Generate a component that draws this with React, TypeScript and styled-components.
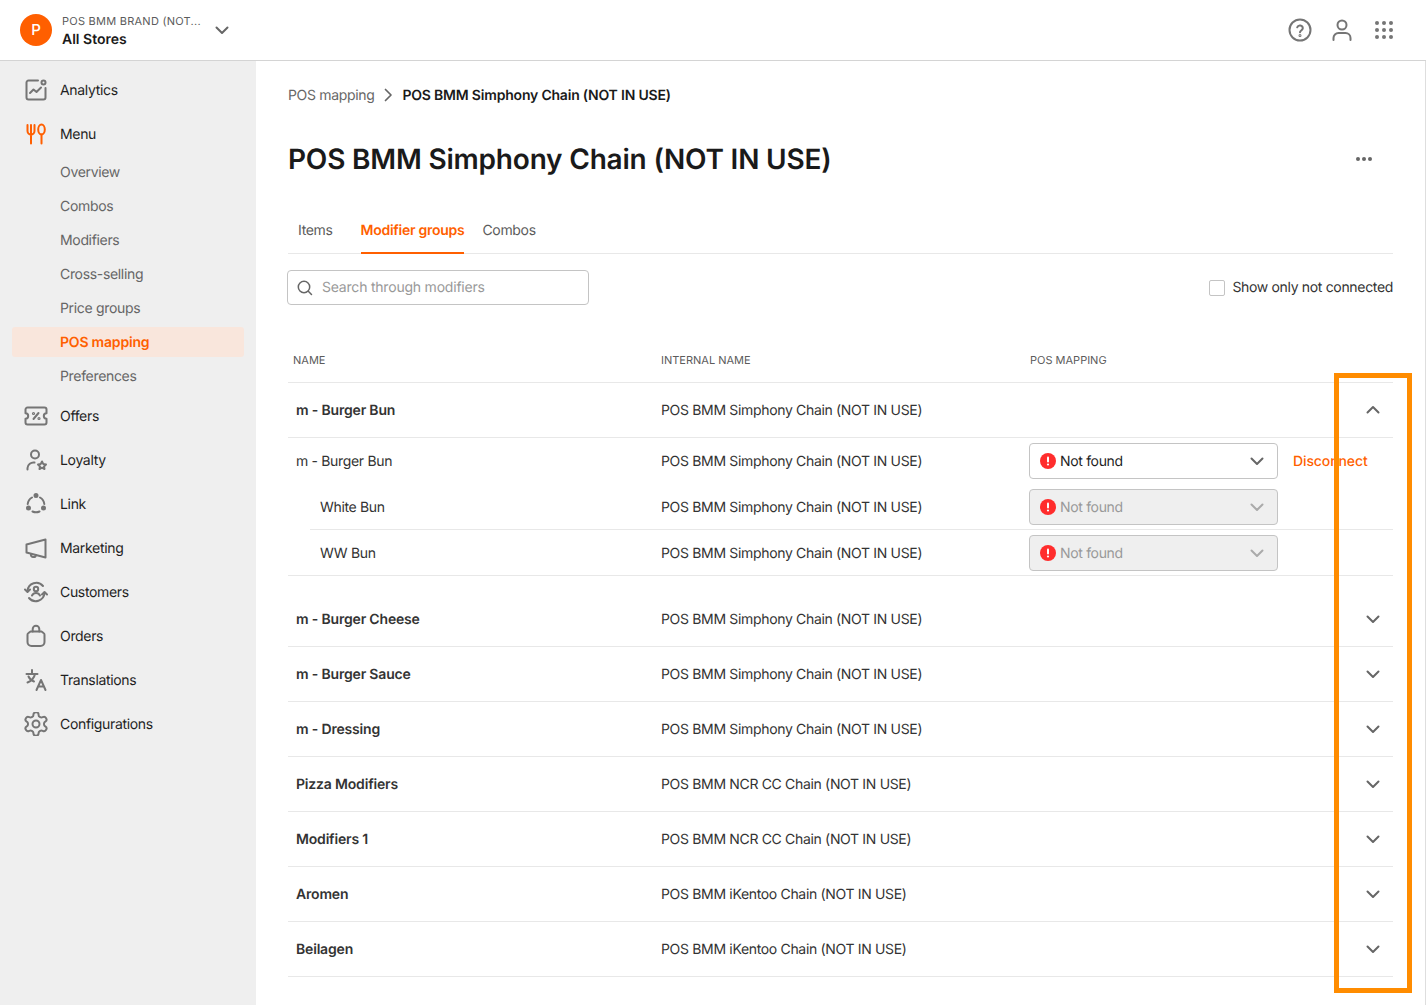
import React from "react";
import styled, { createGlobalStyle } from "styled-components";

const Global = createGlobalStyle`
  html, body { margin: 0; padding: 0; background: #fff; overflow: hidden; }
  body { font-family: Inter, "Liberation Sans", sans-serif; font-size: 14px; color: #1f1f1f; text-rendering: geometricPrecision; letter-spacing: -0.33px; }
  * { box-sizing: border-box; }
`;

const Page = styled.div`
  position: relative;
  width: 1426px;
  height: 1005px;
  overflow: hidden;
  display: flex;
  flex-direction: column;
`;
const TopBar = styled.header`
  height: 61px;
  flex: none;
  display: flex;
  align-items: center;
  padding: 0 30px 1px 20px;
  border-bottom: 1px solid #d4d4d4;
  background: #fff;
`;
const Logo = styled.div`
  width: 32px;
  height: 32px;
  border-radius: 50%;
  background: #ff5f00;
  color: #fff;
  display: flex;
  align-items: center;
  justify-content: center;
  font-size: 15px;
  font-weight: 500;
`;
const Brand = styled.div`
  margin-left: 10px;
  width: 150px;
  padding-top: 2px;
  display: flex;
  flex-direction: column;
  gap: 2px;
`;
const BrandName = styled.div`
  font-size: 11px;
  line-height: 16px;
  letter-spacing: 0.25px;
  color: #5c5c5c;
  white-space: nowrap;
`;
const StoreName = styled.div`
  font-size: 14px;
  line-height: 18px;
  font-weight: 600;
  letter-spacing: 0;
  color: #1a1a1a;
`;
const TopActions = styled.div`
  margin-left: auto;
  display: flex;
  gap: 18px;
  align-items: center;
`;
const Body = styled.div`
  flex: 1;
  display: flex;
  min-height: 0;
`;
const Sidebar = styled.nav`
  width: 256px;
  flex: none;
  background: #efefef;
  padding: 7px 12px 0;
`;
const NavItem = styled.div`
  height: 44px;
  display: flex;
  align-items: center;
  gap: 12px;
  padding-left: 12px;
  color: #1f1f1f;
  font-size: 14px;
`;
const SubList = styled.div`
  display: flex;
  flex-direction: column;
  gap: 4px;
  padding: 2px 0;
  margin: -1px 0 1px;
`;
const SubItem = styled.div<{ $active?: boolean }>`
  height: 30px;
  display: flex;
  align-items: center;
  padding-left: 48px;
  border-radius: 3px;
  font-size: 14px;
  font-weight: ${(p) => (p.$active ? 600 : 400)};
  letter-spacing: ${(p) => (p.$active ? "-0.2px" : "-0.33px")};
  color: ${(p) => (p.$active ? "#ff5f00" : "#666")};
  background: ${(p) => (p.$active ? "#f9e6dc" : "transparent")};
`;
const Main = styled.main`
  flex: 1;
  min-width: 0;
  padding: 0 32px;
  border-right: 1px solid #dedede;
`;
const Crumbs = styled.div`
  height: 68px;
  display: flex;
  align-items: center;
`;
const CrumbLink = styled.span`
  color: #666;
`;
const CrumbCurrent = styled.span`
  font-weight: 600;
  letter-spacing: -0.2px;
  color: #1a1a1a;
`;
const CrumbSep = styled.span`
  width: 28px;
  display: flex;
  justify-content: center;
`;
const TitleRow = styled.div`
  height: 60px;
  display: flex;
  align-items: center;
  justify-content: space-between;
  padding-right: 20px;
`;
const Title = styled.h1`
  margin: 0;
  font-size: 28px;
  line-height: 36px;
  font-weight: 600;
  letter-spacing: -0.2px;
  color: #1a1a1a;
`;
const Tabs = styled.div`
  margin-top: 21px;
  height: 44px;
  display: flex;
  border-bottom: 1px solid #e8e8e8;
`;
const Tab = styled.div<{ $active?: boolean; $last?: boolean }>`
  height: 44px;
  margin-left: ${(p) => (p.$active ? "28px" : p.$last ? "18px" : "10px")};
  display: flex;
  align-items: center;
  padding-bottom: 1px;
  font-weight: ${(p) => (p.$active ? 600 : 400)};
  letter-spacing: ${(p) => (p.$active ? "-0.27px" : "-0.33px")};
  color: ${(p) => (p.$active ? "#ff5f00" : "#5c5c5c")};
  border-bottom: 2px solid ${(p) => (p.$active ? "#ff5f00" : "transparent")};
`;
const FilterRow = styled.div`
  margin-top: 16px;
  display: flex;
  align-items: center;
  justify-content: space-between;
`;
const SearchBox = styled.div`
  margin-left: -1px;
  width: 302px;
  height: 35px;
  border: 1px solid #c4c4c4;
  border-radius: 4px;
  display: flex;
  align-items: center;
  gap: 9px;
  padding-left: 9px;
  color: #999;
  letter-spacing: -0.21px;
`;
const CheckLabel = styled.label`
  display: flex;
  align-items: center;
  gap: 7px;
  color: #333;
`;
const CheckBox = styled.span`
  width: 16px;
  height: 16px;
  border: 1px solid #c4c4c4;
  border-radius: 2px;
  background: #fff;
`;
const HeadRow = styled.div`
  margin-top: 37px;
  height: 41px;
  display: grid;
  grid-template-columns: 373px 369px 1fr;
  align-items: center;
  padding-bottom: 5px;
  font-size: 11px;
  letter-spacing: 0;
  color: #5c5c5c;
  border-bottom: 1px solid #e8e8e8;
`;
const HeadName = styled.div`
  padding-left: 5px;
`;
const GroupRow = styled.div`
  height: 55px;
  display: grid;
  grid-template-columns: 373px 368px 1fr 30px;
  align-items: center;
  border-bottom: 1px solid #e8e8e8;
`;
const GroupName = styled.div`
  padding-left: 8px;
  font-weight: 600;
  letter-spacing: -0.18px;
  color: #333;
`;
const Internal = styled.div`
  color: #333;
`;
const Chevron = styled.div`
  display: flex;
  justify-content: flex-start;
`;
const ChildRow = styled.div<{ $line?: boolean; $wide?: boolean }>`
  height: 46px;
  display: grid;
  grid-template-columns: 373px 368px 249px 1fr;
  align-items: center;
  position: relative;
  &::after {
    content: "";
    display: ${(p) => (p.$line ? "block" : "none")};
    position: absolute;
    left: ${(p) => (p.$wide ? "0" : "22px")};
    right: 0;
    bottom: 0;
    height: 1px;
    background: #e8e8e8;
  }
`;
const ChildName = styled.div<{ $indent?: boolean }>`
  padding-left: ${(p) => (p.$indent ? "32px" : "8px")};
  color: #333;
`;
const Select = styled.div<{ $disabled?: boolean }>`
  height: 36px;
  width: 249px;
  border: 1px solid #c4c4c4;
  border-radius: 4px;
  background: ${(p) => (p.$disabled ? "#efefef" : "#fff")};
  color: ${(p) => (p.$disabled ? "#999" : "#1f1f1f")};
  display: flex;
  align-items: center;
  padding: 0 10px 0 10px;
  gap: 4px;
`;
const SelectArrow = styled.span`
  margin-left: auto;
  display: flex;
`;
const Disconnect = styled.a`
  margin-left: 15px;
  color: #ff5f00;
  font-weight: 500;
  letter-spacing: -0.1px;
`;
const GroupGap = styled.div`
  height: 16px;
`;
const Highlight = styled.div`
  position: absolute;
  left: 1334px;
  top: 373px;
  width: 78px;
  height: 620px;
  border: 5px solid #ff8c00;
  pointer-events: none;
`;

type IP = { c?: string; s?: number };
const Svg: React.FC<{ s?: number; c?: string; w?: number; vb?: string; children: React.ReactNode }> = ({ s = 24, c = "#757575", w = 2, vb = "0 0 24 24", children }) => (
  <svg width={s} height={s} viewBox={vb} fill="none" stroke={c} strokeWidth={w} strokeLinecap="round" strokeLinejoin="round">
    {children}
  </svg>
);
const Down: React.FC<IP> = ({ c = "#666", s = 20 }) => (
  <svg width={s} height={s} viewBox="0 0 20 20" fill="none" stroke={c} strokeWidth="2" strokeLinecap="round" strokeLinejoin="round">
    <path d="M4.500 7.500 10 13l5.500-5.500" />
  </svg>
);
const Up: React.FC<IP> = ({ c = "#666", s = 20 }) => (
  <svg width={s} height={s} viewBox="0 0 20 20" fill="none" stroke={c} strokeWidth="2" strokeLinecap="round" strokeLinejoin="round">
    <path d="M4.500 12.500 10 7l5.500 5.500" />
  </svg>
);
const Alert = () => (
  <svg width="16" height="16" viewBox="0 0 16 16">
    <circle cx="8" cy="8" r="8" fill="#ff2d2d" />
    <rect x="7" y="3.500" width="2" height="6" rx="1" fill="#fff" />
    <circle cx="8" cy="11.500" r="1.100" fill="#fff" />
  </svg>
);

const icons: Record<string, React.ReactNode> = {
  analytics: (
    <Svg>
      <path d="M14 2.500H4.500a2 2 0 0 0-2 2v15a2 2 0 0 0 2 2h15a2 2 0 0 0 2-2V10" />
      <circle cx="19.500" cy="4.500" r="2" />
      <path d="M6 15l3.500-3.500 3 2.500L17 9.500" />
    </Svg>
  ),
  menu: (
    <Svg c="#ff5f00">
      <path d="M3.500 3v6a3.500 3.500 0 0 0 7 0V3M7 3v18.500" />
      <ellipse cx="17.500" cy="7.500" rx="3.300" ry="5" />
      <path d="M17.500 12.500v9" />
    </Svg>
  ),
  offers: (
    <Svg>
      <path d="M3.500 3.500h17a2 2 0 0 1 2 2v3.800a2.700 2.700 0 0 0 0 5.400v3.800a2 2 0 0 1-2 2h-17a2 2 0 0 1-2-2v-3.800a2.700 2.700 0 0 0 0-5.400V5.500a2 2 0 0 1 2-2z" />
      <path d="M14.500 9 9.500 15" />
      <circle cx="9.500" cy="9.500" r=".6" />
      <circle cx="15" cy="14.500" r=".6" />
    </Svg>
  ),
  loyalty: (
    <Svg>
      <circle cx="11" cy="6.500" r="4" />
      <path d="M3.500 21.500V20a6 6 0 0 1 7-5.500" />
      <path d="M18 13.500l1.300 2.600 2.700.4-2 1.900.5 2.600-2.500-1.300-2.500 1.300.5-2.600-2-1.900 2.700-.4z" />
    </Svg>
  ),
  link: (
    <Svg>
      <path d="M8 5.500a8.500 8.500 0 0 0-4.300 6.500M16 5.500a8.500 8.500 0 0 1 4.300 6.500M8.500 19.500a8.500 8.500 0 0 0 7 0" />
      <circle cx="12" cy="3.500" r="1.500" fill="#757575" />
      <circle cx="4.500" cy="16" r="1.500" fill="#757575" />
      <circle cx="19.500" cy="16" r="1.500" fill="#757575" />
    </Svg>
  ),
  marketing: (
    <Svg>
      <path d="M21.500 3.500v18L2.500 16.500v-8z" />
      <path d="M7 18a2.500 2.500 0 0 0 5 1" />
    </Svg>
  ),
  customers: (
    <Svg>
      <path d="M3.500 11a8.800 8.800 0 0 1 15.500-5M20.500 13a8.800 8.800 0 0 1-15.500 5" />
      <path d="M1 9.500l2.500 2.500 2.500-2.500M18 14.500l2.500-2.500 2.500 2.500" />
      <circle cx="12" cy="9" r="2.200" />
      <path d="M8 15.500a4.500 4.500 0 0 1 8 0" />
    </Svg>
  ),
  orders: (
    <Svg>
      <path d="M6.500 7.500h11l2 1.500a2 2 0 0 1 1 1.700V18a4 4 0 0 1-4 4h-9a4 4 0 0 1-4-4v-7.300a2 2 0 0 1 1-1.700z" />
      <path d="M8.700 7.500V5a3.300 3.300 0 0 1 6.600 0v2.500" />
    </Svg>
  ),
  translations: (
    <Svg>
      <path d="M2.500 6h11M8 2v4M11 6c-.8 3.800-3.600 7-7.500 8.500M4.500 8.500c1 2.300 3 4 5.500 5" />
      <path d="M12.500 22l4.500-10 4.500 10M14 18.500h6" />
    </Svg>
  ),
  config: (
    <Svg w={1.700} vb="1.700 1.700 20.600 20.600">
      <path d="M12.220 2h-.44a2 2 0 0 0-2 2v.18a2 2 0 0 1-1 1.730l-.43.250a2 2 0 0 1-2 0l-.15-.080a2 2 0 0 0-2.730.730l-.22.380a2 2 0 0 0 .730 2.730l.15.100a2 2 0 0 1 1 1.720v.510a2 2 0 0 1-1 1.740l-.15.090a2 2 0 0 0-.730 2.730l.22.380a2 2 0 0 0 2.730.730l.15-.080a2 2 0 0 1 2 0l.43.250a2 2 0 0 1 1 1.730V20a2 2 0 0 0 2 2h.44a2 2 0 0 0 2-2v-.18a2 2 0 0 1 1-1.730l.43-.250a2 2 0 0 1 2 0l.15.080a2 2 0 0 0 2.730-.730l.22-.390a2 2 0 0 0-.730-2.730l-.15-.080a2 2 0 0 1-1-1.740v-.5a2 2 0 0 1 1-1.740l.15-.090a2 2 0 0 0 .730-2.730l-.22-.380a2 2 0 0 0-2.730-.730l-.15.080a2 2 0 0 1-2 0l-.43-.250a2 2 0 0 1-1-1.730V4a2 2 0 0 0-2-2z" />
      <circle cx="12" cy="12" r="3" />
    </Svg>
  ),
};

const Help = () => (
  <Svg>
    <circle cx="12" cy="12" r="10.500" />
    <path d="M9.200 9.300a2.900 2.900 0 0 1 5.600 1c0 1.900-2.800 2.500-2.800 4" />
    <circle cx="12" cy="17.500" r=".5" />
  </Svg>
);
const User = () => (
  <Svg>
    <circle cx="12" cy="7" r="4.500" />
    <path d="M3.500 22v-2a5 5 0 0 1 5-5h7a5 5 0 0 1 5 5v2" />
  </Svg>
);
const Apps = () => (
  <svg width="24" height="24" viewBox="0 0 24 24" fill="#757575">
    {[5, 12, 19].map((y) => [5, 12, 19].map((x) => <circle key={`${x}-${y}`} cx={x} cy={y} r="2" />))}
  </svg>
);

const groups1 = ["Analytics:analytics", "Menu:menu"];
const subs = ["Overview", "Combos", "Modifiers", "Cross-selling", "Price groups", "POS mapping", "Preferences"];
const groups2 = [
  "Offers:offers",
  "Loyalty:loyalty",
  "Link:link",
  "Marketing:marketing",
  "Customers:customers",
  "Orders:orders",
  "Translations:translations",
  "Configurations:config",
];
const S = "POS BMM Simphony Chain (NOT IN USE)";
const N = "POS BMM NCR CC Chain (NOT IN USE)";
const K = "POS BMM iKentoo Chain (NOT IN USE)";
const rows: [string, string][] = [
  ["m - Burger Cheese", S],
  ["m - Burger Sauce", S],
  ["m - Dressing", S],
  ["Pizza Modifiers", N],
  ["Modifiers 1", N],
  ["Aromen", K],
  ["Beilagen", K],
];

const Nav = ({ entry }: { entry: string }) => {
  const [label, icon] = entry.split(":");
  return (
    <NavItem>
      {icons[icon]}
      {label}
    </NavItem>
  );
};

export default function App() {
  return (
    <Page>
      <Global />
      <TopBar>
        <Logo>P</Logo>
        <Brand>
          <BrandName>POS BMM BRAND (NOT...</BrandName>
          <StoreName>All Stores</StoreName>
        </Brand>
        <Down s={20} />
        <TopActions>
          <Help />
          <User />
          <Apps />
        </TopActions>
      </TopBar>
      <Body>
        <Sidebar>
          {groups1.map((g) => (
            <Nav key={g} entry={g} />
          ))}
          <SubList>
            {subs.map((s) => (
              <SubItem key={s} $active={s === "POS mapping"}>
                {s}
              </SubItem>
            ))}
          </SubList>
          {groups2.map((g) => (
            <Nav key={g} entry={g} />
          ))}
        </Sidebar>
        <Main>
          <Crumbs>
            <CrumbLink>POS mapping</CrumbLink>
            <CrumbSep>
              <svg width="10" height="14" viewBox="0 0 10 14" fill="none" stroke="#666" strokeWidth="1.700" strokeLinecap="round" strokeLinejoin="round">
                <path d="M2.500 1.500 8 7l-5.500 5.500" />
              </svg>
            </CrumbSep>
            <CrumbCurrent>{S}</CrumbCurrent>
          </Crumbs>
          <TitleRow>
            <Title>{S}</Title>
            <svg width="18" height="6" viewBox="0 0 18 6" fill="#666">
              <circle cx="3" cy="3" r="2" />
              <circle cx="9" cy="3" r="2" />
              <circle cx="15" cy="3" r="2" />
            </svg>
          </TitleRow>
          <Tabs>
            <Tab>Items</Tab>
            <Tab $active>Modifier groups</Tab>
            <Tab $last>Combos</Tab>
          </Tabs>
          <FilterRow>
            <SearchBox>
              <svg width="16" height="16" viewBox="0 0 16 16" fill="none" stroke="#666" strokeWidth="1.500" strokeLinecap="round">
                <circle cx="7" cy="7" r="5.700" />
                <path d="m11.300 11.300 3.200 3.200" />
              </svg>
              Search through modifiers
            </SearchBox>
            <CheckLabel>
              <CheckBox />
              Show only not connected
            </CheckLabel>
          </FilterRow>
          <HeadRow>
            <HeadName>NAME</HeadName>
            <div>INTERNAL NAME</div>
            <div>POS MAPPING</div>
          </HeadRow>
          <GroupRow>
            <GroupName>m - Burger Bun</GroupName>
            <Internal>{S}</Internal>
            <div />
            <Chevron>
              <Up />
            </Chevron>
          </GroupRow>
          <ChildRow>
            <ChildName>m - Burger Bun</ChildName>
            <Internal>{S}</Internal>
            <Select>
              <Alert />
              Not found
              <SelectArrow>
                <Down />
              </SelectArrow>
            </Select>
            <Disconnect>Disconnect</Disconnect>
          </ChildRow>
          <ChildRow $line>
            <ChildName $indent>White Bun</ChildName>
            <Internal>{S}</Internal>
            <Select $disabled>
              <Alert />
              Not found
              <SelectArrow>
                <Down c="#aaa" />
              </SelectArrow>
            </Select>
          </ChildRow>
          <ChildRow $line $wide>
            <ChildName $indent>WW Bun</ChildName>
            <Internal>{S}</Internal>
            <Select $disabled>
              <Alert />
              Not found
              <SelectArrow>
                <Down c="#aaa" />
              </SelectArrow>
            </Select>
          </ChildRow>
          <GroupGap />
          {rows.map(([n, i]) => (
            <GroupRow key={n}>
              <GroupName>{n}</GroupName>
              <Internal>{i}</Internal>
              <div />
              <Chevron>
                <Down />
              </Chevron>
            </GroupRow>
          ))}
        </Main>
      </Body>
      <Highlight />
    </Page>
  );
}
